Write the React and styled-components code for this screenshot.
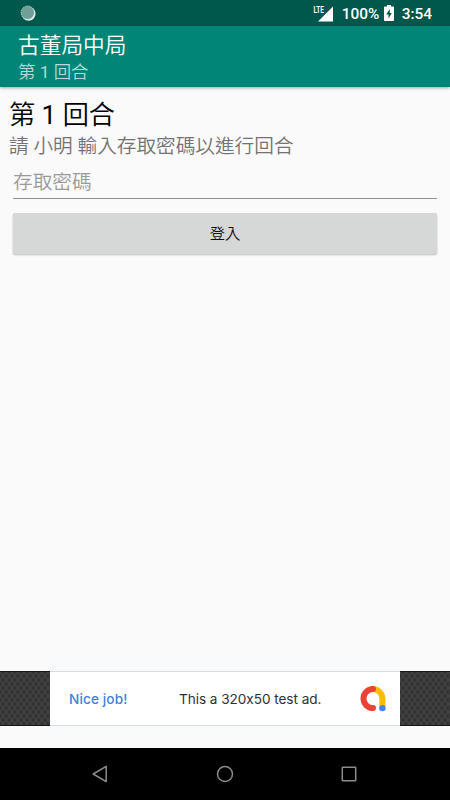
import React from "react";
import styled, { createGlobalStyle } from "styled-components";

export default function App() {
  return (
    <Screen>
      <GlobalStyle />
      <StatusBar>
        <SyncIcon viewBox="0 0 16 16">
          <circle cx="8.6" cy="8.7" r="7" fill="#e4f2ee" />
          <circle cx="7.6" cy="7.6" r="6.6" fill="#6f9f96" />
          <circle cx="7.6" cy="7.6" r="6.6" fill="none" stroke="#c3dcd6" strokeWidth="1" strokeDasharray="1 1" />
        </SyncIcon>
        <StatusIcons>
          <SignalIcon viewBox="0 0 21 18">
            <path d="M20 2.5V17.5H5Z" fill="#ffffff" />
            <LteText x="0.4" y="8.6" textLength="10.5" lengthAdjust="spacingAndGlyphs">LTE</LteText>
          </SignalIcon>
          <BatteryLevel>100%</BatteryLevel>
          <BatteryIcon viewBox="0 0 10 16">
            <path d="M3 0H7V1.6H9.2Q10 1.6 10 2.4V15.2Q10 16 9.2 16H.8Q0 16 0 15.2V2.4Q0 1.6 .8 1.6H3Z" fill="#ffffff" />
            <path d="M5.8 4L2.3 9.4H4.5V13.4L7.8 7.9H5.8Z" fill="#00574b" />
          </BatteryIcon>
          <Clock>3:54</Clock>
        </StatusIcons>
      </StatusBar>
      <Toolbar>
        <ToolbarTitle>古董局中局</ToolbarTitle>
        <ToolbarSubtitle>
          第 <RoundNumber>1</RoundNumber> 回合
        </ToolbarSubtitle>
      </Toolbar>
      <Content>
        <RoundTitle>
          第 <RoundNumber>1</RoundNumber> 回合
        </RoundTitle>
        <RoundMessage>請 小明 輸入存取密碼以進行回合</RoundMessage>
        <PasswordInput type="password" placeholder="存取密碼" />
        <LoginButton>登入</LoginButton>
      </Content>
      <AdBanner>
        <AdPattern />
        <AdBody>
          <AdPraise>Nice job!</AdPraise>
          <AdText>This a 320x50 test ad.</AdText>
          <AdLogo viewBox="0 0 28 28">
            <path d="M14 4.1A9.6 9.6 0 0 1 23.4 13.7V23" stroke="#fbbc04" />
            <path d="M14 4.1A9.5 9.5 0 0 0 14 23.1" stroke="#ea4335" />
            <circle cx="23.4" cy="23.1" r="3.2" fill="#4285f4" />
          </AdLogo>
        </AdBody>
        <AdPattern />
      </AdBanner>
      <NavBar>
        <NavIcon viewBox="0 0 18 18">
          <path d="M15.2 1.4V16.6L2.2 9Z" />
        </NavIcon>
        <NavIcon viewBox="0 0 18 18">
          <circle cx="9" cy="9" r="7.5" />
        </NavIcon>
        <NavIcon viewBox="0 0 18 18">
          <rect x="2.3" y="2.3" width="13.4" height="13.4" rx="0.5" />
        </NavIcon>
      </NavBar>
    </Screen>
  );
}

const GlobalStyle = createGlobalStyle`
  body {
    margin: 0;
    background-color: #fafafa;
  }
`;

const Screen = styled.div`
  width: 450px;
  height: 800px;
  display: flex;
  flex-direction: column;
  box-sizing: border-box;
  background-color: #fafafa;
  font-family: Roboto, "Noto Sans CJK TC", sans-serif;
  overflow: hidden;
`;

const StatusBar = styled.div`
  height: 26px;
  flex-shrink: 0;
  display: flex;
  flex-direction: row;
  justify-content: space-between;
  align-items: center;
  padding: 0px 18px 0px 20px;
  box-sizing: border-box;
  background-color: #00574b;
`;
const SyncIcon = styled.svg`
  width: 16px;
  height: 16px;
`;
const StatusIcons = styled.div`
  display: flex;
  flex-direction: row;
  align-items: center;
  color: #ffffff;
  font-size: 15.4px;
  font-weight: 500;
  line-height: 26px;
`;
const SignalIcon = styled.svg`
  width: 21px;
  height: 18px;
  margin: 0px 8px 0px 0px;
`;
const LteText = styled.text`
  fill: #ffffff;
  font-size: 9.6px;
  font-weight: 700;
`;
const BatteryLevel = styled.div`
  width: 37px;
  margin: 2px 5px 0px 0px;
  white-space: nowrap;
`;
const BatteryIcon = styled.svg`
  width: 10px;
  height: 16px;
  margin: 0px 8px 0px 0px;
`;
const Clock = styled.div`
  margin: 2px 0px 0px 0px;
`;

const Toolbar = styled.div`
  height: 61px;
  flex-shrink: 0;
  display: flex;
  flex-direction: column;
  padding: 6px 18px 0px 18px;
  box-sizing: border-box;
  background-color: #008577;
  box-shadow: 0px 1px 3px rgba(0, 0, 0, 0.35);
`;
const ToolbarTitle = styled.div`
  color: #ffffff;
  font-size: 21.7px;
  font-weight: 350;
  line-height: 28px;
`;
const ToolbarSubtitle = styled.div`
  color: #b3dad6;
  font-size: 17.4px;
  font-weight: 350;
  line-height: 24px;
`;
const RoundNumber = styled.span`
  font-weight: 400;
`;

const Content = styled.div`
  flex: 1;
  display: flex;
  flex-direction: column;
  padding: 12px 9px 0px 9px;
  box-sizing: border-box;
`;
const RoundTitle = styled.div`
  color: #000000;
  font-size: 26.2px;
  font-weight: 350;
  line-height: 32px;
`;
const RoundMessage = styled.div`
  color: #737373;
  font-size: 19.65px;
  font-weight: 350;
  line-height: 31px;
`;
const PasswordInput = styled.input`
  height: 34px;
  margin: 3px 4px 0px 4px;
  padding: 1px 0px 0px 0px;
  border: none;
  border-bottom: 1px solid #8f8f8f;
  border-radius: 0px;
  outline: none;
  box-sizing: border-box;
  background-color: transparent;
  font-family: inherit;
  font-size: 19.65px;
  font-weight: 350;

  &::placeholder {
    color: #9a9a9a;
    opacity: 1;
  }
`;
const LoginButton = styled.button`
  height: 41px;
  margin: 14px 4px 0px 4px;
  padding: 1px 0px 0px 0px;
  border: none;
  border-radius: 2px;
  box-sizing: border-box;
  background-color: #d6d7d7;
  box-shadow: 0px 1px 2px rgba(0, 0, 0, 0.25);
  color: #111111;
  font-family: inherit;
  font-size: 15.3px;
  font-weight: 350;
  line-height: 40px;
`;

const AdBanner = styled.div`
  height: 55px;
  flex-shrink: 0;
  display: flex;
  flex-direction: row;
  margin: 0px 0px 22px 0px;
`;
const AdPattern = styled.div`
  width: 50px;
  box-sizing: border-box;
  border: 1px solid #161616;
  border-width: 1px 0px;
  background-color: #303030;
  background-image: radial-gradient(#404040 30%, transparent 60%),
    radial-gradient(#404040 30%, transparent 60%);
  background-size: 6px 8px;
  background-position: 0px 0px, 3px 4px;
`;
const AdBody = styled.div`
  width: 350px;
  display: flex;
  flex-direction: row;
  align-items: center;
  padding: 0px 13px 0px 19px;
  border: 1px solid #cfdfe5;
  border-width: 1px 0px;
  box-sizing: border-box;
  background-color: #ffffff;
  font-family: Inter, sans-serif;
  font-size: 13.6px;
  line-height: 20px;
  white-space: nowrap;
`;
const AdPraise = styled.div`
  width: 110px;
  color: #3f7fe0;
  font-weight: 500;
  letter-spacing: 0.12px;
`;
const AdText = styled.div`
  flex: 1;
  color: #303134;
  letter-spacing: -0.05px;
`;
const AdLogo = styled.svg`
  width: 28px;
  height: 28px;
  fill: none;
  stroke-width: 6;
  stroke-linecap: round;
`;

const NavBar = styled.div`
  height: 52px;
  flex-shrink: 0;
  display: flex;
  flex-direction: row;
  justify-content: space-between;
  align-items: center;
  padding: 0px 92px 0px 91px;
  box-sizing: border-box;
  background-color: #000000;
`;
const NavIcon = styled.svg`
  width: 18px;
  height: 18px;
  fill: none;
  stroke: #8c8c8c;
  stroke-width: 1.5;
  stroke-linejoin: round;
`;
